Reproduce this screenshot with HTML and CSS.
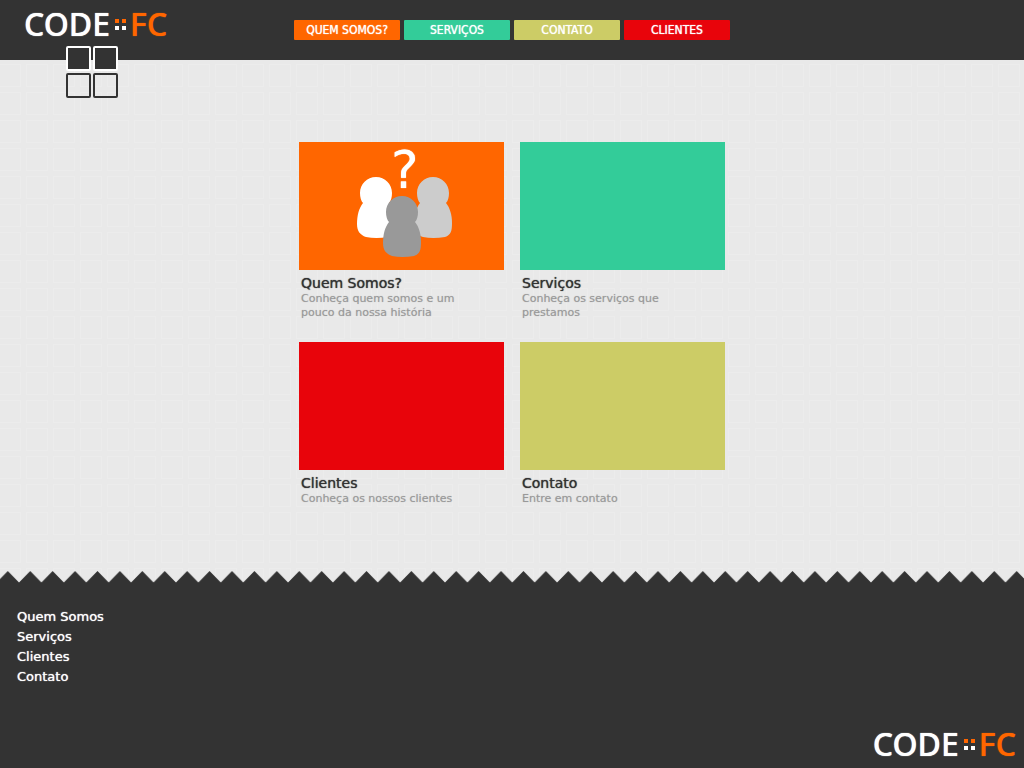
FILE: index.html
```html
<!DOCTYPE html>
<html lang="pt-BR">
<head>
<meta charset="utf-8">
<meta name="viewport" content="width=device-width, initial-scale=1">
<title>CODE::FC</title>
<link rel="stylesheet" href="styles.css">
</head>
<body>
<header class="header">
  <a class="logo" href="#">
    <span>CODE</span>
    <svg class="logo-dots" viewBox="0 0 11 11" aria-hidden="true"><path class="dots-top" d="M0 0h4v4H0zM7 0h4v4H7z"/><path class="dots-bottom" d="M0 7h4v4H0zM7 7h4v4H7z"/></svg>
    <span class="logo-accent">FC</span>
  </a>
  <svg class="emblem" viewBox="0 0 52 52" aria-hidden="true">
    <g class="emblem-filled"><rect x="1" y="1" width="23" height="23" rx="1"/><rect x="28" y="1" width="23" height="23" rx="1"/></g>
    <g class="emblem-open"><rect x="1" y="28" width="23" height="23" rx="1"/><rect x="28" y="28" width="23" height="23" rx="1"/></g>
  </svg>
  <nav class="nav">
    <a class="nav-link orange" href="#">QUEM SOMOS?</a>
    <a class="nav-link green" href="#">SERVIÇOS</a>
    <a class="nav-link olive" href="#">CONTATO</a>
    <a class="nav-link red" href="#">CLIENTES</a>
  </nav>
</header>

<main class="main">
  <div class="cards">
    <article class="card">
      <a class="tile orange" href="#" aria-label="Quem Somos?">
        <svg class="people" viewBox="0 0 96 84" aria-hidden="true">
          <defs><path id="person" d="M19 0C28 0 35 7 35 16C35 20 34 24 32 26C36 31 38 38 38 46C38 54 37 58 31 60Q19 62 9 60C3 58 0 54 0 47C0 38 2 31 6 26C4 24 3 20 3 16C3 7 10 0 19 0Z"/></defs>
          <use href="#person" fill="#fff"/>
          <use href="#person" x="57" fill="#ccc"/>
          <use href="#person" x="26" y="19" fill="#999"/>
        </svg>
        <span class="question">?</span>
      </a>
      <h2 class="card-title">Quem Somos?</h2>
      <p class="card-text">Conheça quem somos e um pouco da nossa história</p>
    </article>
    <article class="card">
      <a class="tile green" href="#" aria-label="Serviços"></a>
      <h2 class="card-title">Serviços</h2>
      <p class="card-text">Conheça os serviços que prestamos</p>
    </article>
    <article class="card">
      <a class="tile red" href="#" aria-label="Clientes"></a>
      <h2 class="card-title">Clientes</h2>
      <p class="card-text">Conheça os nossos clientes</p>
    </article>
    <article class="card">
      <a class="tile olive" href="#" aria-label="Contato"></a>
      <h2 class="card-title">Contato</h2>
      <p class="card-text">Entre em contato</p>
    </article>
  </div>
</main>

<svg class="zigzag" aria-hidden="true">
  <defs><pattern id="teeth" x="-3.4" width="22.42" height="12" patternUnits="userSpaceOnUse"><path d="M0 11.5L11.21 0L22.42 11.5V12H0Z" fill="#333"/></pattern></defs>
  <rect width="100%" height="12" fill="url(#teeth)"/>
</svg>
<footer class="footer">
  <ul class="footer-links">
    <li><a href="#">Quem Somos</a></li>
    <li><a href="#">Serviços</a></li>
    <li><a href="#">Clientes</a></li>
    <li><a href="#">Contato</a></li>
  </ul>
  <a class="logo" href="#">
    <span>CODE</span>
    <svg class="logo-dots" viewBox="0 0 11 11" aria-hidden="true"><path class="dots-top" d="M0 0h4v4H0zM7 0h4v4H7z"/><path class="dots-bottom" d="M0 7h4v4H0zM7 7h4v4H7z"/></svg>
    <span class="logo-accent">FC</span>
  </a>
</footer>
</body>
</html>
```
FILE: styles.css
```css
* { box-sizing: border-box; }

body {
  margin: 0;
  min-height: 100vh;
  display: flex;
  flex-direction: column;
  font-family: Verdana, "DejaVu Sans", sans-serif;
  background-color: #e9e9e9;
  background-image: url("data:image/svg+xml,%3Csvg xmlns='http://www.w3.org/2000/svg' width='27' height='28'%3E%3Crect x='.5' y='.5' width='21' height='22' fill='none' stroke='%23ececec'/%3E%3C/svg%3E");
  background-position: -1px 64px;
}

a { color: inherit; text-decoration: none; }

.orange { background: #f60; }
.green { background: #3c9; }
.olive { background: #cc6; }
.red { background: #e8040b; }

.header {
  position: relative;
  height: 60px;
  display: grid;
  grid-template-columns: 1fr auto 1fr;
  align-items: center;
  padding: 0 24px;
  background: #333;
}

.logo {
  display: flex;
  align-items: center;
  font: 500 32px/40px "Noto Sans", "Open Sans", sans-serif;
  color: #fff;
  text-shadow: 0 0 1px currentColor;
}
.header .logo { align-self: start; margin-top: 4px; }
.logo-dots { width: 11px; height: 11px; margin: 0 4px 0 5px; }
.dots-top { fill: #f60; }
.dots-bottom { fill: #fff; }
.logo-accent { color: #f60; text-shadow: 0 0 1px currentColor; }

.emblem {
  position: absolute;
  left: 66px;
  top: 46px;
  width: 52px;
  height: 52px;
  stroke-width: 2;
}
.emblem-filled { fill: #333; stroke: #fff; }
.emblem-open { fill: none; stroke: #333; }

.nav { display: flex; gap: 4px; }
.nav-link {
  width: 106px;
  border-radius: 1px;
  font: 400 12px/20px "DejaVu Sans Condensed", "DejaVu Sans", sans-serif;
  text-align: center;
  text-shadow: 0 0 1px #fff;
  color: #fff;
}

.main { flex: 1; padding: 82px 16px 45px; }
.cards {
  display: grid;
  grid-template-columns: 205px 205px;
  grid-auto-rows: minmax(184px, auto);
  gap: 16px;
  justify-content: center;
}
.tile {
  position: relative;
  display: block;
  height: 128px;
}
.people {
  position: absolute;
  left: 58px;
  top: 35px;
  width: 96px;
  height: 84px;
}
.question {
  position: absolute;
  left: 92px;
  top: 0;
  font-size: 52px;
  line-height: 56px;
  color: #fff;
  text-shadow: 0 0 1px #fff;
}
.card-title {
  margin: 4px 2px 0;
  font-size: 14px;
  line-height: 18px;
  font-weight: 400;
  color: #333;
  text-shadow: 0 0 1px #333;
}
.card-text {
  margin: 0 24px 0 2px;
  font-size: 11px;
  line-height: 14px;
  color: #999;
  text-shadow: 0 0 1px #bbb;
}

.zigzag { display: block; width: 100%; height: 12px; }
.footer {
  min-height: 185px;
  display: flex;
  justify-content: space-between;
  padding: 24px 8px 4px 17px;
  background: #333;
  color: #fff;
}
.footer-links {
  margin: 0;
  padding: 0;
  list-style: none;
  font-size: 13px;
  line-height: 20px;
  text-shadow: 0 0 1px #fff;
}
.footer .logo { align-self: flex-end; }
```
